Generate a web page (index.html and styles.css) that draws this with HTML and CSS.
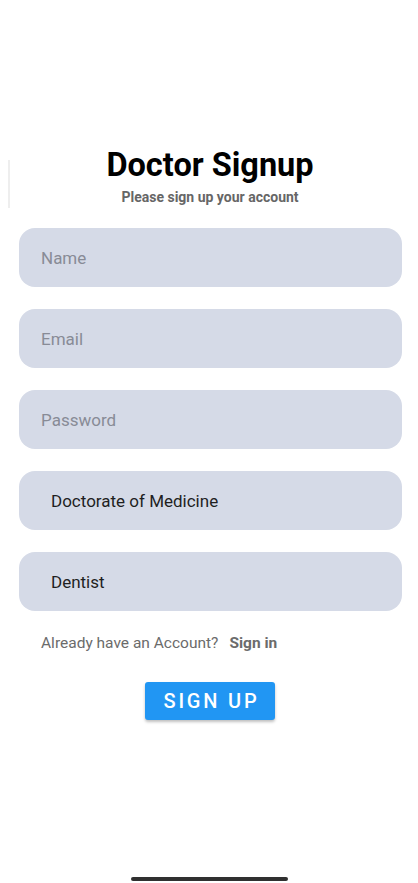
FILE: index.html
```html
<!DOCTYPE html>
<html>
<head>
<meta charset="utf-8">
<link rel="stylesheet" href="styles.css">
</head>
<body>
<div class="screen">
  <div class="edge"></div>
  <header class="head">
    <h1 class="title">Doctor Signup</h1>
    <p class="subtitle">Please sign up your account</p>
  </header>
  <form class="form">
    <div class="field placeholder">Name</div>
    <div class="field placeholder">Email</div>
    <div class="field placeholder">Password</div>
    <div class="field filled">Doctorate of Medicine</div>
    <div class="field filled">Dentist</div>
  </form>
  <div class="signin">
    <span class="ask">Already have an Account?</span>
    <span class="link">Sign in</span>
  </div>
  <div class="actions">
    <button class="btn" type="button">SIGN UP</button>
  </div>
  <div class="home"><span class="bar"></span></div>
</div>
</body>
</html>
```
FILE: styles.css
```css
* { box-sizing: border-box; }
html, body { margin: 0; padding: 0; background: #ffffff; }
body { font-family: Roboto, "Liberation Sans", sans-serif; }
.screen {
  position: relative;
  width: 418px;
  height: 883px;
  display: flex;
  flex-direction: column;
  padding-top: 146px;
}
.edge {
  position: absolute;
  left: 8px;
  top: 160px;
  width: 2px;
  height: 48px;
  background: #eeeeee;
}
.head { text-align: center; padding-left: 2px; }
.title {
  margin: 0;
  font-size: 32.5px;
  line-height: 38px;
  font-weight: 700;
  color: #000000;
}
.subtitle {
  margin: 5px 0 0;
  font-size: 14px;
  line-height: 16px;
  font-weight: 700;
  color: #666666;
}
.form {
  margin: 23px 0 0;
  padding: 0 16px 0 19px;
  display: flex;
  flex-direction: column;
  gap: 22px;
}
.field {
  height: 59px;
  border-radius: 16px;
  background: #d5dae7;
  display: flex;
  align-items: center;
  font-size: 17px;
}
.placeholder { padding-left: 22px; color: #888b96; }
.filled { padding-left: 32px; color: #1f1f1f; }
.signin {
  margin-top: 23px;
  padding-left: 41px;
  font-size: 15.5px;
  line-height: 18px;
  display: flex;
  gap: 11px;
}
.ask { color: #6b6b6b; }
.link { color: #6b6b6b; font-weight: 700; }
.actions {
  margin-top: 30px;
  padding-left: 2px;
  display: flex;
  justify-content: center;
}
.btn {
  width: 130px;
  height: 38px;
  border: none;
  border-radius: 3px;
  background: #2196f3;
  color: #ffffff;
  font-family: Roboto, "Liberation Sans", sans-serif;
  font-size: 20px;
  font-weight: 500;
  letter-spacing: 2.8px;
  text-indent: 3px;
  box-shadow: 0 2px 3px rgba(0,0,0,0.25);
  padding: 0;
}
.home {
  margin-top: auto;
  padding-bottom: 2px;
  display: flex;
  justify-content: center;
}
.bar {
  width: 157px;
  height: 4px;
  border-radius: 2px;
  background: #303030;
}
```
